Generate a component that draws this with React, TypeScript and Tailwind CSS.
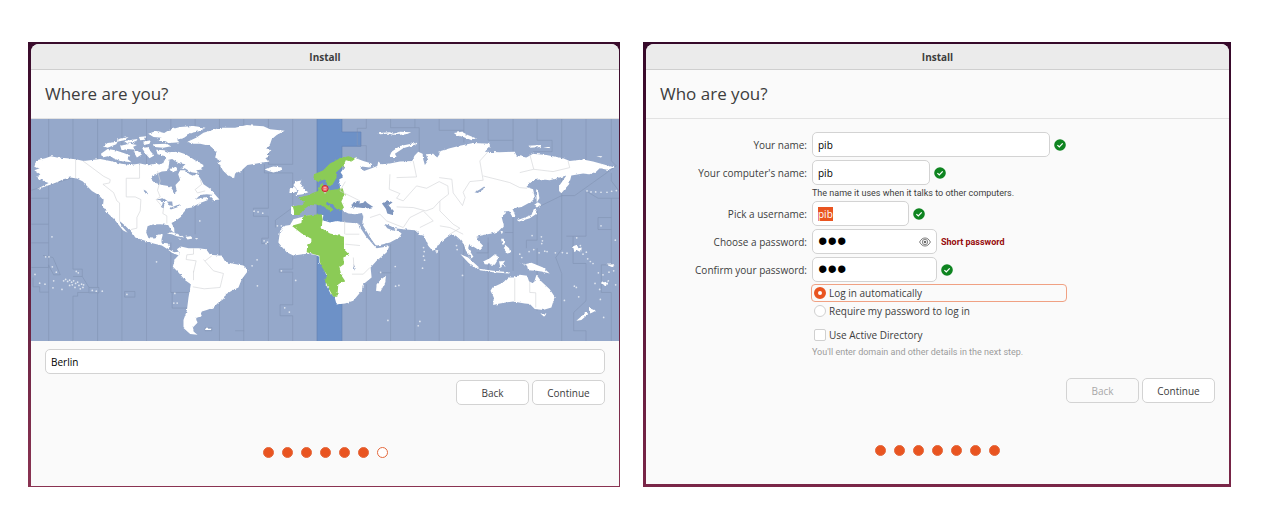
import { useEffect, useRef, useState } from "react";
import type { ReactNode } from "react";

/* ---------- World map ---------- */

const ARCTIC =
  "M242 128L262 114L285 118L310 126L330 134L322 144L334 154L300 150L280 142L262 136L246 140Z M248 106L262 96L292 92L288 100L262 110Z M292 84L325 78L312 88L290 92Z M300 104L330 98L350 102L338 108L348 116L322 114L304 118Z M312 90L352 84L346 94L322 98Z M340 122L352 118L362 132L350 140Z M356 78L378 76L374 86L360 88Z M368 92L392 88L388 98L372 102Z M366 112L384 108L392 122L402 134L388 142L376 128Z M398 100L440 98L452 106L430 110L402 108Z M384 68L408 60L432 66L448 56L480 48L520 45L556 50L540 60L512 66L492 80L470 86L478 94L448 96L434 90L412 90L424 80L400 78Z M408 116L432 118L446 124L474 122L496 130L512 140L528 150L550 162L546 176L528 178L538 188L514 184L494 172L480 174L496 160L474 156L456 144L440 148L436 136L412 130Z M412 166L428 156L434 170L424 178Z M448 176L466 168L472 178L456 184Z";

const NORTH_AMERICA =
  "M48 148L75 142L92 136L110 140L140 142L170 146L190 150L215 147L240 144L270 150L300 158L330 162L360 158L385 163L410 158L425 165L432 150L438 140L448 152L445 168L440 180L425 182L400 192L392 205L402 215L425 222L450 226L458 238L462 248L470 240L466 222L480 207L474 190L480 178L495 178L508 190L520 195L530 188L542 205L550 220L568 232L582 245L580 252L560 250L540 252L528 264L545 262L560 258L562 268L540 276L528 282L515 290L502 292L490 305L482 318L465 330L454 336L462 352L463 367L453 358L444 342L420 340L395 341L382 346L378 365L385 382L405 383L412 372L428 370L424 386L424 396L442 397L448 405L446 416L462 424L480 422L476 434L455 426L440 414L425 404L400 398L375 390L345 380L338 368L315 345L298 330L302 342L322 366L308 358L292 338L282 325L260 305L248 285L250 268L235 252L215 240L200 225L188 212L170 203L150 200L128 205L115 212L100 218L60 232L50 234L85 216L72 212L62 205L48 200L60 190L42 178L58 172L42 168Z M568 256L582 248L598 266L580 268Z";

const CARIBBEAN =
  "M440 368L455 364L485 374L492 380L470 376L455 370Z M496 378L512 376L518 383L502 386Z M474 384L484 384L480 387Z M524 382L534 382L530 386Z";

const GREENLAND =
  "M82 92L108 80L130 65L180 50L225 50L260 42L310 46L330 55L374 59L350 72L335 85L330 100L318 112L334 118L320 128L328 136L316 142L325 152L290 158L262 162L245 178L225 188L222 202L200 190L185 175L175 155L184 150L165 140L170 122L150 105L120 98L98 98Z M322 172L340 167L365 170L366 178L340 185L325 180L314 176Z";

const SOUTH_AMERICA =
  "M50 415L62 407L85 412L115 412L138 415L150 432L185 435L195 452L215 458L250 464L265 478L245 505L235 530L215 540L195 552L190 565L175 575L160 590L140 598L120 604L125 616L108 622L112 636L98 650L102 664L112 672L90 670L70 652L70 628L80 600L85 560L92 520L75 508L55 485L38 468L44 445L60 428Z M134 654L154 654L152 658L136 658Z";

const BRITAIN = "M408 212L424 209L420 218L430 226L430 234L445 244L428 250L406 253L414 243L410 234L400 222Z M390 232L402 227L410 236L402 246L388 246Z M393 287L402 284L402 312L393 312Z";

const AFRICA =
  "M400 325L420 320L450 312L490 312L488 328L510 335L530 330L560 335L598 338L602 352L618 376L640 402L650 412L688 406L680 425L650 450L632 470L635 500L610 520L605 540L580 570L555 578L530 581L524 560L510 545L497 520L502 500L490 470L478 455L478 438L465 432L440 429L400 434L380 424L365 408L355 395L360 360L375 345L390 342Z M648 540L650 520L664 505L678 495L676 515L662 542Z";

const EURASIA =
  "M122 144L150 140L168 142L190 150L215 158L208 170L180 166L192 180L215 172L232 165L235 152L245 160L270 158L300 152L340 150L343 135L355 122L368 128L370 145L375 162L385 148L378 130L400 128L412 140L420 128L415 122L450 112L480 104L520 96L570 98L570 108L555 122L600 124L645 122L650 134L680 140L700 128L740 132L790 142L810 150L850 146L880 152L910 160L945 170L930 178L900 172L890 182L870 190L850 188L815 194L812 205L808 220L795 235L785 247L778 240L778 225L790 208L800 194L780 200L750 208L725 205L700 208L680 228L700 235L705 258L690 275L665 288L645 292L640 298L648 318L638 318L628 300L612 302L618 308L605 316L612 345L595 362L575 368L545 374L530 378L535 390L550 405L538 418L525 410L508 400L505 412L522 440L515 442L500 425L492 400L480 385L468 375L455 370L440 380L415 400L408 415L398 420L385 405L372 375L360 372L345 358L310 355L285 352L265 342L253 339L262 352L280 360L288 354L305 368L298 380L270 395L232 405L226 402L212 382L198 358L187 340L190 318L186 306L165 310L145 308L130 300L125 290L118 270L120 230L118 205L132 198L122 185L134 168L122 156Z";

const EAST_ISLANDS =
  "M302 608L320 608L314 619Z M445 590L468 600L452 608Z M440 604L446 610L425 628L410 630Z M238 455L255 460L275 456L310 470L330 488L305 482L290 480L265 478L262 465Z M130 452L150 442L165 430L178 440L165 462L135 460Z M62 430L85 440L118 470L105 472L85 455Z M118 474L160 480L210 484L208 488L160 484L120 478Z M178 452L196 450L190 458L198 468L188 464L182 472Z M184 384L192 384L194 400L188 402Z M196 402L208 412L212 426L202 428L192 414Z M182 360L190 362L186 370Z M232 328L255 320L275 312L282 295L292 292L288 310L270 322L238 332Z M283 282L294 274L304 280L292 290Z M289 235L295 238L299 262L291 275Z M-14 418L-5 418L-8 430Z M42 66L66 62L84 72L108 82L96 88L70 78L50 72Z M266 104L300 102L304 108L272 110Z M310 108L332 108L328 112Z M470 136L488 136L484 140Z M400 406L412 402L416 412L426 410L424 424L412 418L404 424Z M486 516L504 512L498 528Z M500 462L524 460L520 470Z";

const AUSTRALIA =
  "M152 540L158 530L190 515L205 500L222 500L240 492L262 495L268 512L282 518L290 492L305 512L330 535L345 558L335 590L310 598L285 595L270 580L255 578L220 572L180 578L160 583L162 560Z";

const NOVAYA = "M268 138L275 122L300 105L350 95L352 99L310 112L285 128L290 138Z M236 66L270 64L280 68L300 62L334 64L320 70L290 72L262 68L240 70Z";

const GREEN_EUROPE =
  "M-22 286L-4 283L6 283L12 272L-6 262L10 256L22 254L38 246L54 240L60 222L68 216L72 232L90 238L128 232L134 252L124 272L132 290L122 300L110 294L95 280L80 274L78 280L92 288L100 296L92 304L82 294L65 282L50 284L30 282L16 292L8 304L-2 312L-18 312L-18 300Z M40 202L42 190L70 178L90 158L120 142L145 136L168 142L155 152L138 147L132 160L122 172L108 185L110 200L95 225L82 224L74 206L52 212Z";

const GREEN_AFRICA =
  "M6 322L14 314L65 310L68 325L65 352L90 368L132 378L132 415L148 432L130 440L132 460L118 470L125 495L135 510L115 520L112 558L100 558L84 530L75 508L82 494L65 468L60 455L58 435L42 430L20 424L22 400L34 398L34 384L5 368L-25 345L4 336Z";

const ISLETS: [number, number][] = [
  [95, 378], [76, 438], [86, 438], [96, 468], [108, 484], [44, 491], [58, 517], [74, 520], [100, 510], [98, 531], [125, 536],
  [168, 482], [174, 486], [130, 510], [136, 506], [142, 512], [148, 508], [154, 514], [160, 510], [166, 518], [148, 524],
  [156, 522], [164, 530], [172, 514], [176, 524], [184, 520], [188, 530], [180, 534], [190, 522], [216, 539], [228, 541],
  [246, 541], [320, 551], [464, 548], [461, 577], [471, 577], [409, 453], [539, 330], [711, 447], [696, 465], [712, 525],
  [702, 301], [714, 303], [728, 307], [732, 390], [742, 394], [738, 398], [772, 345], [784, 345], [784, 480], [827, 509],
  [794, 591], [808, 604], [1126, 467], [1127, 526], [1137, 524], [1082, 485], [1200, 632], [1104, 629], [1195, 645],
  [1211, 410], [1213, 422], [1211, 436], [1214, 448], [1208, 472], [1310, 404], [1312, 416], [1537, 374], [1565, 378],
  [1568, 390], [1566, 398], [1528, 422], [1542, 416], [1558, 426], [1575, 421], [1582, 422], [1607, 426], [1628, 425],
  [1642, 427], [1500, 430], [1506, 440], [1671, 381], [1700, 424], [1690, 430], [1682, 404], [1704, 444], [1712, 452],
  [1720, 458], [1736, 486], [1664, 526], [1670, 530], [1634, 569], [1677, 558], [1742, 566], [1744, 345], [1787, 388],
  [1702, 240], [1714, 243], [1728, 243], [1744, 244], [1762, 244], [1776, 241], [1790, 239], [1726, 518], [1740, 536],
  [1750, 492], [1768, 484], [1782, 480], [1766, 510], [1788, 522], [1752, 620], [1328, 494], [1250, 422],
];

const OCEAN_ZONES =
  "M85 24V262M85 340V396M85 462L85 692M33 262H85V340H33M33 396H85V470H33M68 434L98 440L120 492H100L84 462M38 500V528H58V544H85M158 24V475M158 475H186V497H158M186 497L206 530V545H172V556H158V692M206 530H236V546H206M232 24V530M232 546V692M305 24V692M379 24V340M379 390V692M452 24V60M452 395V545H505M456 545V592H505M525 24V60M525 170V370M598 24V692M671 24V692M745 24V160H818M733 160V186H818M745 186V292H700V316H745V382H725V398H745V692M818 24V160M818 186V290L766 328V350M818 434V475H778V484H818V582H780V615H818V692M158 200L33 238M313 542H344V559H313ZM555 651H575V660H555ZM645 660H672M1039 24V52H1012V104H1039V150M1039 520V692M1112 24V50H1198V150M1112 400V486H1076M1112 486V692M1185 24V50M1185 360V692M1258 24V58H1332M1258 420V692M1332 24V95M1332 400V692M1405 24V88H1480V122M1405 380V692M1405 395V426H1370M1480 24V88M1480 320V365H1455M1480 365V480M1552 24V88H1597V122H1540M1552 290L1626 254V24M1552 300V388H1520V412M1552 412V600M1626 254V415L1608 440L1626 488V692M1626 254H1665L1790 165L1775 150V24M1699 24V150M1699 240V376H1640M1660 376V458H1699V570L1662 605V660H1699V692M1699 240L1735 262H1798M1775 186V210L1798 240M1735 320H1775V356H1735ZM1775 262V320M1775 356V462H1745V545H1775V692";

const LAND_BORDERS =
  "M166 146V202M188 150L215 170L250 196L270 206L268 216L248 220L280 245L290 270L298 276V330M358 162V202H318V258H345L362 266L360 300L350 320V352L332 356M412 180L420 210L412 238L420 258L408 266L430 292L428 308L440 315V338M540 205L545 220L525 236L532 246L555 240M520 412L520 430L500 432L498 446L528 450L520 485M520 480V508M518 528L552 534L600 530L610 488L580 480L550 446M575 435L555 450M976 212L960 240L1020 270M1130 200L1190 198L1180 150M1110 190L1108 235L1140 248L1130 262L1150 270L1190 225L1220 232L1258 212L1284 225L1286 250L1260 270L1240 292L1218 300L1180 290L1130 288M1258 200L1296 205L1300 246L1328 284L1336 260L1330 244L1350 212L1390 208L1380 150L1405 122M1390 195L1470 215L1500 230L1522 232M1500 185L1542 175L1530 130M1542 175L1600 182L1650 170L1645 150M1050 320L1080 310L1100 330L1150 350L1170 320L1210 300L1240 330L1200 350M1260 270V300L1300 340L1320 352L1290 370M976 370H1018M974 330V370M976 400L1020 404M1050 470L1030 490M1000 440L1002 470M996 490L1030 490M1260 345L1290 350L1330 370M1485 502V572M1530 512V545L1548 546V590";

function WorldMap() {
  return (
    <svg viewBox="32 24 1766 668" role="img" aria-label="Time zone map" className="block w-full">
      <defs>
        <filter id="coast" x="0%" y="0%" width="100%" height="100%">
          <feTurbulence type="fractalNoise" baseFrequency="0.09" numOctaves="3" seed="4" result="noise" />
          <feDisplacementMap in="SourceGraphic" in2="noise" scale="8" xChannelSelector="R" yChannelSelector="G" />
        </filter>
      </defs>
      <rect x="32" y="24" width="1766" height="668" fill="#95a8ca" />
      <path d="M891 24H966V63H1023V106H966V692H891Z" fill="#6d91c7" />
      <path d="M966 310H1030V336H966Z" fill="#95a8ca" />
      <path d={OCEAN_ZONES} fill="none" stroke="#8495b5" strokeWidth="2" />
      <path d="M891 24V692M966 24V63H1023V106H966V150M966 570V692" fill="none" stroke="#6583b4" strokeWidth="2" />
      <g filter="url(#coast)" fill="#ffffff">
        <rect x="32" y="24" width="1766" height="668" fill="none" />
        <path d={ARCTIC} />
        <path d={NORTH_AMERICA} />
        <path d={CARIBBEAN} />
        <g transform="translate(420 0)">
          <path d={GREENLAND} />
          <path d={SOUTH_AMERICA} />
          <path d={BRITAIN} />
          <path d={AFRICA} />
        </g>
        <g transform="translate(840 0)">
          <path d={EURASIA} />
          <path d={NOVAYA} />
          <path d="M152 290L160 275L175 270L182 278L196 270L202 276L220 288L200 293L175 290Z" fill="#7f96be" />
          <path d="M246 278L262 268L278 274L266 284L282 300L278 312L262 308L258 294Z" fill="#7f96be" />
          <path d={GREEN_AFRICA} fill="#8bcb57" />
          <path d={GREEN_EUROPE} fill="#8bcb57" />
        </g>
        <g transform="translate(1260 0)">
          <path d={EAST_ISLANDS} />
          <path d={AUSTRALIA} />
          <path d="M104 244L120 236L134 226L130 236L114 246Z" fill="#95a8ca" />
        </g>
        <g fill="#95a8ca">
          <path d="M408 266L430 262L442 270L425 270ZM424 290L428 274L434 274L430 292ZM440 272L456 272L458 286L448 282ZM448 292L468 284L480 280L474 288L452 296Z" />
          <path d="M370 236L378 240L384 250L376 248Z" />
          <path d="M1000 462L1006 472L1004 480Z" />
        </g>
      </g>
      <path d={LAND_BORDERS} fill="none" stroke="#d5d7da" strokeWidth="2" strokeLinejoin="round" />
      <g fill="#dfe5ef">
        {ISLETS.map(([x, y]) => (
          <circle key={`${x}-${y}`} cx={x} cy={y} r="2.6" />
        ))}
      </g>
      <path d="M909 240L915 249L921 240Z" fill="#c9d6b8" />
      <circle cx="915" cy="233" r="9.5" fill="#ee6a6a" stroke="#c62f35" strokeWidth="3" />
      <path d="M911 230H919M911 235H919" stroke="#ffd6d6" strokeWidth="2" />
    </svg>
  );
}

/* ---------- Shared pieces ---------- */

function InstallWindow({ title, frame, children }: { title: string; frame: string; children: ReactNode }) {
  return (
    <section className={`flex flex-col ${frame}`}>
      <div className="flex grow flex-col overflow-hidden rounded-t-lg bg-[#fafafa]">
        <div className="flex h-[26px] items-center justify-center border-b border-[#cfcfcf] bg-[#ebebeb] text-[10px] font-bold">
          Install
        </div>
        <h1 className="flex h-[49px] items-center border-b border-[#e2e2e2] px-[14px] text-[17px]">{title}</h1>
        {children}
      </div>
    </section>
  );
}

function NavButtons({ backDisabled = false }: { backDisabled?: boolean }) {
  const base = "h-[25px] w-[73px] rounded-[5px] border border-[#d3d3d3]";
  return (
    <div className="flex justify-end gap-[3px] px-[14px]">
      <button type="button" disabled={backDisabled} className={`${base} ${backDisabled ? "bg-[#fafafa] text-[#a8a8a8]" : "bg-white"}`}>
        Back
      </button>
      <button type="button" className={`${base} bg-white`}>
        Continue
      </button>
    </div>
  );
}

function Steps({ done }: { done: number }) {
  return (
    <div className="flex justify-center gap-2">
      {[0, 1, 2, 3, 4, 5, 6].map((i) => (
        <span key={i} className={`size-[11px] rounded-full border border-[#e4683c] ${i < done ? "bg-[#e95420]" : "bg-white"}`} />
      ))}
    </div>
  );
}

function Check() {
  return (
    <svg viewBox="0 0 12 12" className="size-3 shrink-0" aria-hidden="true">
      <circle cx="6" cy="6" r="5.8" fill="#0e8420" />
      <path d="M3.4 6.1L5.3 7.9L8.7 4.4" fill="none" stroke="#ffffff" strokeWidth="1.3" />
    </svg>
  );
}

function Eye() {
  return (
    <svg viewBox="0 0 12 10" className="h-[10px] w-3" aria-hidden="true" fill="none" stroke="#6b6b6b">
      <path d="M0.6 5C2 2.2 3.9 1 6 1S10 2.2 11.4 5C10 7.8 8.1 9 6 9S2 7.8 0.6 5Z" strokeWidth="0.9" />
      <circle cx="6" cy="5" r="2.7" strokeWidth="0.8" />
      <circle cx="6" cy="5" r="1.3" fill="#6b6b6b" stroke="none" />
    </svg>
  );
}

const FIELD = "h-[25px] rounded-[5px] border border-[#d3d3d3] bg-white px-[5px] text-black outline-none";
const BULLETS = "font-['Liberation_Sans'] text-[27px] leading-none";
const TOGGLE = "size-3 shrink-0 appearance-none border outline-none";
const HINT = "font-['Roboto'] text-[9px] leading-[10px]";

/* ---------- Pages ---------- */

function LocationPage() {
  const [city, setCity] = useState("Berlin");
  return (
    <InstallWindow title="Where are you?" frame="bg-linear-to-b from-[#3a0c2c] to-[#8a3352] pt-[2px] pr-px pb-px pl-[3px]">
      <WorldMap />
      <div className="flex flex-col px-[14px] pt-2 pb-[6px]">
        <input aria-label="Location" value={city} onChange={(e) => setCity(e.target.value)} className={FIELD} />
      </div>
      <NavButtons />
      <div className="mt-auto pb-[28px]">
        <Steps done={6} />
      </div>
    </InstallWindow>
  );
}

function AccountPage() {
  const username = useRef<HTMLInputElement>(null);
  const [auto, setAuto] = useState(true);

  useEffect(() => {
    username.current?.focus();
    username.current?.select();
  }, []);

  return (
    <InstallWindow title="Who are you?" frame="bg-linear-to-b from-[#36092a] to-[#7a2648] pt-[2px] pr-[2px] pb-[3px] pl-[3px]">
      <form className="pt-[13px]">
        <div className="grid grid-cols-[161px_minmax(0,1fr)] items-center gap-x-[5px] gap-y-[3px]">
          <label htmlFor="name" className="text-right">Your name:</label>
          <div className="flex items-center gap-1">
            <input id="name" defaultValue="pib" className={`${FIELD} w-[238px]`} />
            <Check />
          </div>

          <label htmlFor="host" className="text-right">Your computer's name:</label>
          <div className="flex items-center gap-1">
            <input id="host" defaultValue="pib" className={`${FIELD} w-[118px]`} />
            <Check />
          </div>
          <p className={`${HINT} col-start-2`}>The name it uses when it talks to other computers.</p>

          <label htmlFor="user" className="text-right">Pick a username:</label>
          <div className="flex items-center gap-1">
            <input id="user" ref={username} defaultValue="pib" className={`${FIELD} w-[97px] selection:bg-[#e95420] selection:text-white`} />
            <Check />
          </div>

          <label htmlFor="pass" className="text-right">Choose a password:</label>
          <div className="flex items-center gap-1">
            <div className={`${FIELD} flex w-[125px] items-center`}>
              <input id="pass" type="password" defaultValue="pib" className={`${BULLETS} h-[23px] min-w-0 grow outline-none`} />
              <button type="button" aria-label="Show password">
                <Eye />
              </button>
            </div>
            <span className={`${HINT} font-bold text-[#970c0c]`}>Short password</span>
          </div>

          <label htmlFor="confirm" className="text-right">Confirm your password:</label>
          <div className="flex items-center gap-1">
            <input id="confirm" type="password" defaultValue="pib" className={`${FIELD} ${BULLETS} w-[125px]`} />
            <Check />
          </div>
        </div>

        <div className="flex flex-col items-start pt-[2px] pl-[165px]">
          <label className="flex h-[18px] w-[256px] items-center gap-[3px] rounded-[4px] border border-[#f0a183] pl-[2px]">
            <input type="radio" name="login" checked={auto} onChange={() => setAuto(true)} className={`${TOGGLE} rounded-full border-[#d0d0d0] bg-white checked:border-4 checked:border-[#e95420]`} />
            Log in automatically
          </label>
          <label className="flex h-[18px] items-center gap-[3px] pl-[3px]">
            <input type="radio" name="login" checked={!auto} onChange={() => setAuto(false)} className={`${TOGGLE} rounded-full border-[#d0d0d0] bg-white checked:border-4 checked:border-[#e95420]`} />
            Require my password to log in
          </label>
          <label className="mt-[6px] flex h-[18px] items-center gap-[3px] pl-[3px]">
            <input type="checkbox" className={`${TOGGLE} rounded-[2px] border-[#d0d0d0] bg-white checked:bg-[#e95420]`} />
            Use Active Directory
          </label>
          <p className={`${HINT} pt-[3px] pl-px text-[#9c9c9c]`}>You'll enter domain and other details in the next step.</p>
        </div>
      </form>
      <div className="pt-[21px]">
        <NavButtons backDisabled />
      </div>
      <div className="mt-auto pb-[28px]">
        <Steps done={7} />
      </div>
    </InstallWindow>
  );
}

export default function App() {
  return (
    <main className="grid grid-cols-[592fr_588fr] gap-[23px] bg-white pt-[42px] pr-[36px] pb-[31px] pl-[28px] font-['Open_Sans','Noto_Sans',sans-serif] text-[10px] leading-[14px] text-[#3d3d3d] *:min-h-[445px]">
      <LocationPage />
      <AccountPage />
    </main>
  );
}
